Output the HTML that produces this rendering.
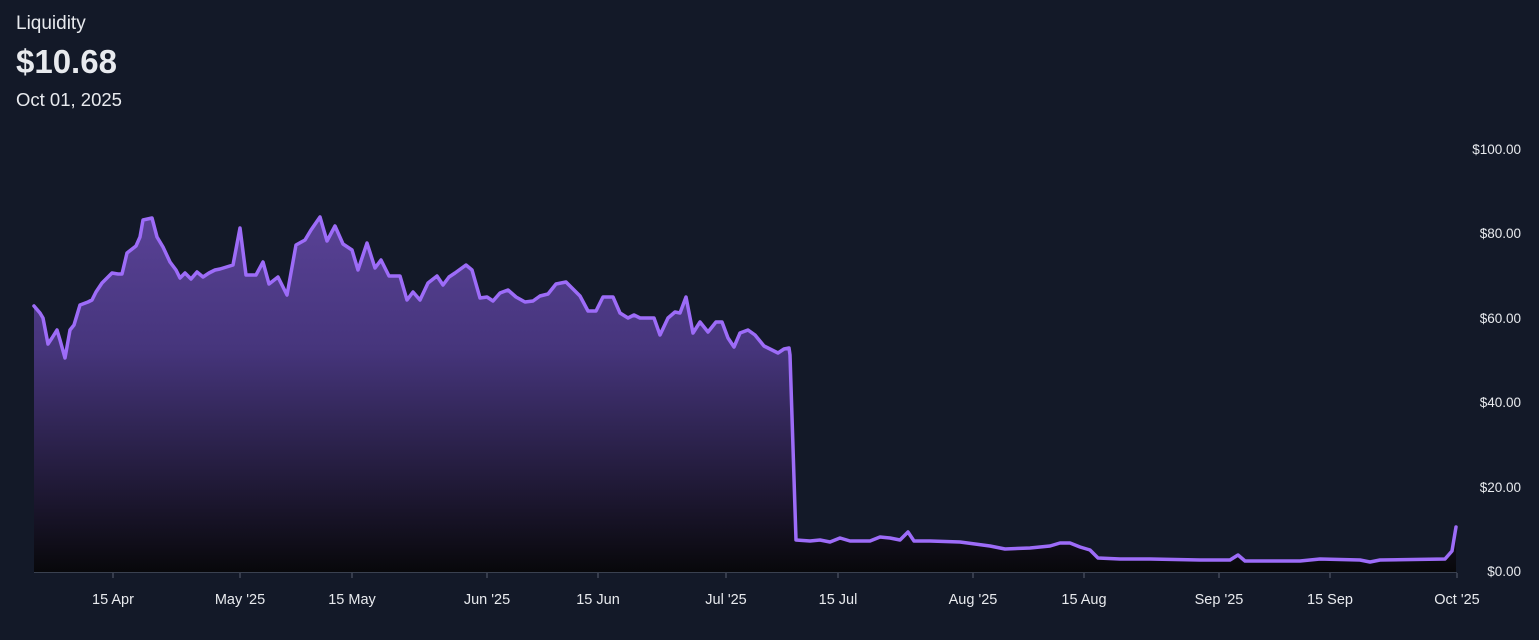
<!DOCTYPE html>
<html><head><style>
body{margin:0;background:#131928;width:1539px;height:640px;overflow:hidden;font-family:"Liberation Sans",sans-serif;color:#e8eaee;position:relative}
.t1{position:absolute;left:16px;top:13px;font-size:19px}
.t2{position:absolute;left:16px;top:43px;font-size:33px;font-weight:bold}
.t3{position:absolute;left:16px;top:89px;font-size:18.5px}
</style></head><body>
<div class="t1">Liquidity</div>
<div class="t2">$10.68</div>
<div class="t3">Oct 01, 2025</div>
<svg width="1539" height="640" style="position:absolute;left:0;top:0">
<defs><linearGradient id="g" x1="0" y1="200" x2="0" y2="572" gradientUnits="userSpaceOnUse">
<stop offset="0" stop-color="#5b4399"/><stop offset="0.4" stop-color="#46357c"/><stop offset="1" stop-color="#08080b"/></linearGradient></defs>
<path fill="url(#g)" d="M34,572 L34,306 40,313 43,318 48,344 52,338 57,330 60,340 65,358 70,330 74,325 80,305 88,302 92,300 96,292 102,283 108,277 112,273 118,274 122,274 127,253 136,246 140,237 143,220 152,218 157,237 163,247 170,262 176,270 180,278 185,273 191,279 197,272 203,277 209,273 215,270 220,269 233,265 240,228 246,275 256,275 263,262 269,284 278,277 287,295 296,245 305,240 311,230 320,217 327,241 335,226 343,244 352,250 358,270 367,243 375,268 381,260 389,276 400,276 407,300 413,292 420,300 428,283 437,276 443,285 449,277 455,273 466,265 472,270 480,298 487,297 493,301 500,293 508,290 516,297 525,302 533,301 540,296 548,294 556,284 566,282 572,288 580,296 588,311 596,311 603,297 613,297 620,313 628,318 634,315 640,318 648,318 654,318 660,335 668,318 675,312 680,313 686,297 693,333 700,322 708,332 716,322 722,322 728,338 734,347 740,333 748,330 755,335 764,346 770,349 778,353 784,349 789,348 790,355 796,540 810,541 820,540 830,542 840,538 850,541 870,541 880,537 890,538 900,540 908,532 914,541 930,541 960,542 990,546 1005,549 1030,548 1050,546 1060,543 1070,543 1080,547 1090,550 1098,558 1120,559 1150,559 1200,560 1230,560 1238,555 1245,561 1300,561 1320,559 1360,560 1370,562 1380,560 1445,559 1452,551 1456,527 L1456,572 Z"/>
<polyline fill="none" stroke="#9d6cf8" stroke-width="3.5" stroke-linejoin="round" stroke-linecap="round" points="34,306 40,313 43,318 48,344 52,338 57,330 60,340 65,358 70,330 74,325 80,305 88,302 92,300 96,292 102,283 108,277 112,273 118,274 122,274 127,253 136,246 140,237 143,220 152,218 157,237 163,247 170,262 176,270 180,278 185,273 191,279 197,272 203,277 209,273 215,270 220,269 233,265 240,228 246,275 256,275 263,262 269,284 278,277 287,295 296,245 305,240 311,230 320,217 327,241 335,226 343,244 352,250 358,270 367,243 375,268 381,260 389,276 400,276 407,300 413,292 420,300 428,283 437,276 443,285 449,277 455,273 466,265 472,270 480,298 487,297 493,301 500,293 508,290 516,297 525,302 533,301 540,296 548,294 556,284 566,282 572,288 580,296 588,311 596,311 603,297 613,297 620,313 628,318 634,315 640,318 648,318 654,318 660,335 668,318 675,312 680,313 686,297 693,333 700,322 708,332 716,322 722,322 728,338 734,347 740,333 748,330 755,335 764,346 770,349 778,353 784,349 789,348 790,355 796,540 810,541 820,540 830,542 840,538 850,541 870,541 880,537 890,538 900,540 908,532 914,541 930,541 960,542 990,546 1005,549 1030,548 1050,546 1060,543 1070,543 1080,547 1090,550 1098,558 1120,559 1150,559 1200,560 1230,560 1238,555 1245,561 1300,561 1320,559 1360,560 1370,562 1380,560 1445,559 1452,551 1456,527"/>
<line x1="34" y1="572.5" x2="1457" y2="572.5" stroke="#3a4150" stroke-width="1"/>
<g stroke="#5a6070"><line x1="113" y1="573" x2="113" y2="578"/><line x1="240" y1="573" x2="240" y2="578"/><line x1="352" y1="573" x2="352" y2="578"/><line x1="487" y1="573" x2="487" y2="578"/><line x1="598" y1="573" x2="598" y2="578"/><line x1="726" y1="573" x2="726" y2="578"/><line x1="838" y1="573" x2="838" y2="578"/><line x1="973" y1="573" x2="973" y2="578"/><line x1="1084" y1="573" x2="1084" y2="578"/><line x1="1219" y1="573" x2="1219" y2="578"/><line x1="1330" y1="573" x2="1330" y2="578"/><line x1="1457" y1="573" x2="1457" y2="578"/></g>
<g fill="#e8eaee" font-family="Liberation Sans, sans-serif" font-size="14.5" text-anchor="middle">
<text x="113" y="604">15 Apr</text><text x="240" y="604">May '25</text><text x="352" y="604">15 May</text><text x="487" y="604">Jun '25</text><text x="598" y="604">15 Jun</text><text x="726" y="604">Jul '25</text><text x="838" y="604">15 Jul</text><text x="973" y="604">Aug '25</text><text x="1084" y="604">15 Aug</text><text x="1219" y="604">Sep '25</text><text x="1330" y="604">15 Sep</text><text x="1457" y="604">Oct '25</text>
</g>
<g fill="#e8eaee" font-family="Liberation Sans, sans-serif" font-size="13.5" text-anchor="end">
<text x="1521" y="154">$100.00</text><text x="1521" y="238">$80.00</text><text x="1521" y="323">$60.00</text><text x="1521" y="407">$40.00</text><text x="1521" y="492">$20.00</text><text x="1521" y="576">$0.00</text>
</g>
</svg>
</body></html>
